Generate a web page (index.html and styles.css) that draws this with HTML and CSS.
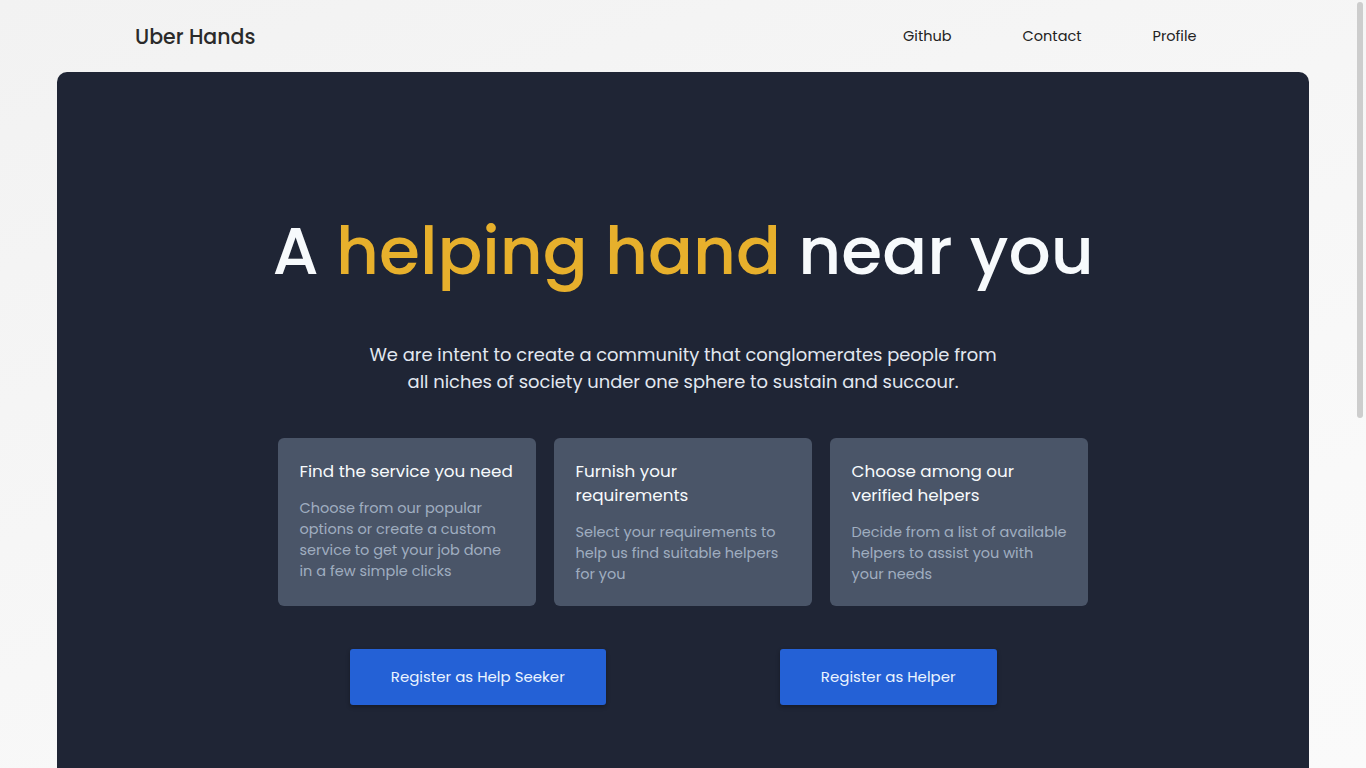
FILE: index.html
```html
<!DOCTYPE html>
<html lang="en">
<head>
<meta charset="utf-8">
<title>Uber Hands</title>
<link rel="stylesheet" href="styles.css">
</head>
<body>
<header class="topbar">
  <a class="brand" href="#">Uber Hands</a>
  <nav class="nav">
    <a class="nav-link" href="#">Github</a>
    <a class="nav-link" href="#">Contact</a>
    <a class="nav-link" href="#">Profile</a>
  </nav>
</header>
<main class="panel">
  <section class="hero">
    <h1 class="headline">A <span class="accent">helping hand</span> near you</h1>
    <p class="lead">We are intent to create a community that conglomerates people from all niches of society under one sphere to sustain and succour.</p>
    <div class="cards">
      <div class="card">
        <h3 class="card-title">Find the service you need</h3>
        <p class="card-text">Choose from our popular options or create a custom service to get your job done in a few simple clicks</p>
      </div>
      <div class="card">
        <h3 class="card-title">Furnish your requirements</h3>
        <p class="card-text">Select your requirements to help us find suitable helpers for you</p>
      </div>
      <div class="card">
        <h3 class="card-title">Choose among our verified helpers</h3>
        <p class="card-text">Decide from a list of available helpers to assist you with your needs</p>
      </div>
    </div>
    <div class="actions">
      <a class="btn" href="#">Register as Help Seeker</a>
      <a class="btn" href="#">Register as Helper</a>
    </div>
  </section>
</main>
<div class="scroll-thumb" aria-hidden="true"></div>
</body>
</html>
```

FILE: styles.css
```css
* { box-sizing: border-box; }

html {
  background: linear-gradient(160deg, #f2f2f2 0%, #f9f9f9 50%, #fcfcfc 100%);
}

body {
  margin: 0;
  font-family: "Poppins", "Open Sans", "DejaVu Sans", sans-serif;
  color: #222;
}

a { text-decoration: none; color: inherit; }

.topbar {
  height: 72px;
  display: flex;
  align-items: center;
  justify-content: space-between;
  padding: 0 134px 0 135px;
}

.brand {
  font-size: 20.5px;
  font-weight: 500;
  color: #2a2a2a;
}

.nav { display: flex; }

.nav-link {
  font-size: 14.5px;
  color: #222;
  padding: 0 35.5px;
}

.panel {
  width: 1252px;
  margin: 0 auto;
  background: #1f2535;
  border-radius: 10px 10px 0 0;
  min-height: 1346px;
}

.hero {
  width: 821px;
  margin: 0 auto;
  padding-top: 136px;
  text-align: center;
}

.headline {
  margin: 0;
  font-size: 66.3px;
  line-height: 86px;
  font-weight: 500;
  color: #f7fafc;
  white-space: nowrap;
}

.accent { color: #e7b02c; }

.lead {
  width: 640px;
  margin: 47px auto 0;
  font-size: 17.9px;
  line-height: 27px;
  color: #e2e8f0;
}

.cards {
  display: grid;
  grid-template-columns: repeat(3, 258px);
  gap: 18px;
  justify-content: center;
  margin-top: 43px;
  text-align: left;
}

.card {
  background: #4a5568;
  border-radius: 6px;
  padding: 21px 21px 21.5px 21.5px;
}

.card-title {
  margin: 0 0 14.5px;
  font-size: 16.8px;
  line-height: 24px;
  font-weight: 400;
  color: #f7fafc;
}

.card-text {
  margin: 0;
  font-size: 14.5px;
  line-height: 21px;
  color: #a0aec0;
}

.actions {
  display: grid;
  grid-template-columns: 1fr 1fr;
  justify-items: center;
  margin-top: 43px;
}

.btn {
  display: block;
  height: 56px;
  line-height: 56px;
  padding: 0 41px;
  background: #2461d6;
  color: #ebf4ff;
  font-size: 15px;
  border-radius: 3px;
  box-shadow: 0 2px 4px rgba(0, 0, 0, 0.3);
}

.scroll-thumb {
  position: fixed;
  top: 2px;
  right: 3px;
  width: 6px;
  height: 416px;
  border-radius: 3px;
  background: #cdcdcd;
}
```
